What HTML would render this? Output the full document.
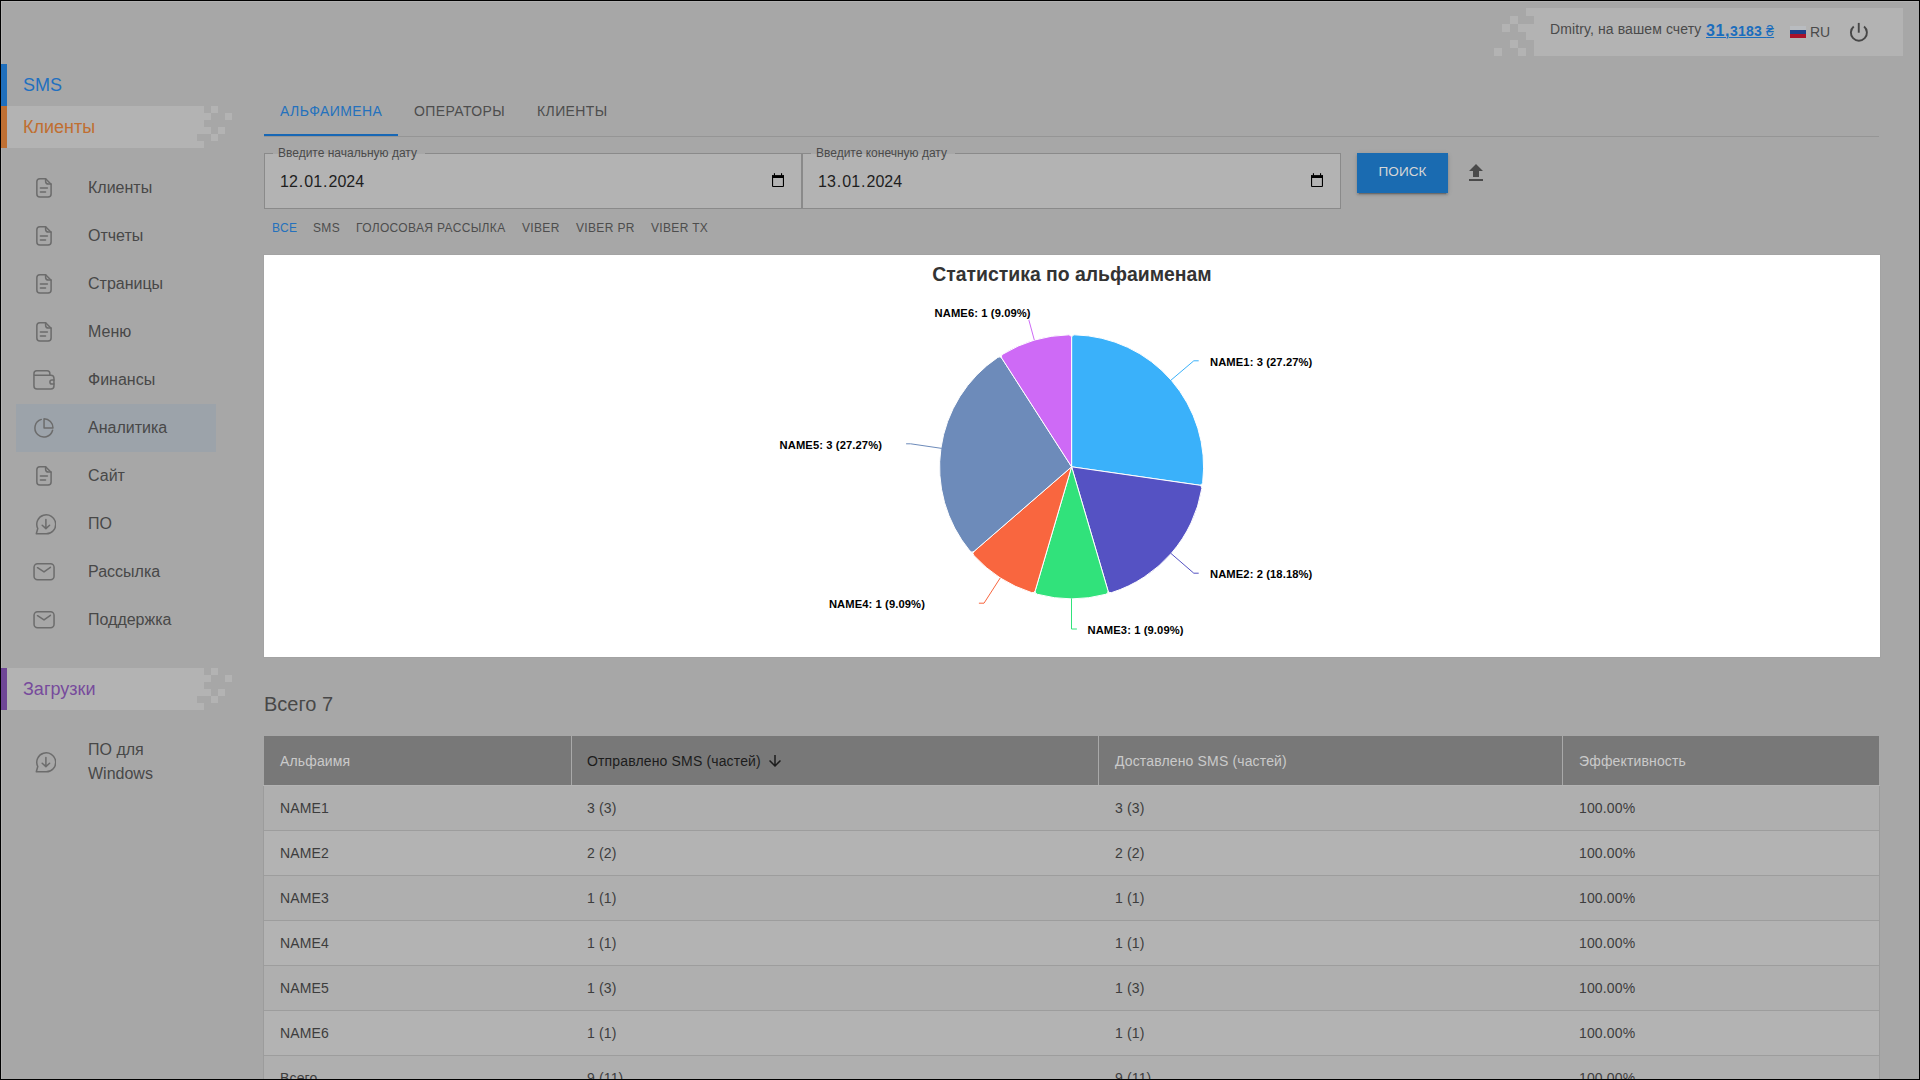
<!DOCTYPE html>
<html><head><meta charset="utf-8">
<style>
*{box-sizing:border-box;margin:0;padding:0}
html,body{width:1920px;height:1080px;overflow:hidden}
body{position:relative;background:#a7a7a7;font-family:"Liberation Sans",sans-serif;color:#4a4a4a}
.a{position:absolute;white-space:nowrap}
.lt{background:#b3b3b3}
.frame{position:absolute;left:0;top:0;width:1920px;height:1080px;border:1px solid #000;pointer-events:none;z-index:50}
.frame2{position:absolute;left:1px;top:1px;width:1918px;height:1078px;border-top:1px solid #b2b2b2;border-left:1px solid #b2b2b2}
.sq{position:absolute;background:#b3b3b3}
.item{position:absolute;left:88px;margin-top:1px;font-size:16px;line-height:20px;color:#484848}
.ico{position:absolute;left:32px;width:24px;height:24px}
.ico svg{width:24px;height:24px;display:block}
.tab{position:absolute;top:101px;font-size:14px;line-height:20px;letter-spacing:0.02857em;color:#4d4d4d}
.chip{position:absolute;top:220px;font-size:12px;line-height:16px;letter-spacing:0.02857em;color:#4d4d4d}
.th{position:absolute;top:751px;font-size:14px;line-height:20px;letter-spacing:0.01071em;color:#cacaca}
.td{position:absolute;font-size:14px;line-height:20px;letter-spacing:0.01071em;color:#3d3d3d}
.row{position:absolute;left:263px;width:1617px;height:45px;background:#afafaf;border-bottom:1px solid #9d9d9d;border-left:1px solid #9c9c9c;border-right:1px solid #9c9c9c}
</style></head><body>
<div class="frame"></div><div class="frame2"></div>

<!-- HEADER BOX -->
<div class="a lt" style="left:1534px;top:8px;width:369px;height:48px"></div>
<div class="sq" style="left:1526px;top:8px;width:8px;height:8px"></div>
<div class="sq" style="left:1510px;top:16px;width:8px;height:8px"></div>
<div class="sq" style="left:1502px;top:24px;width:8px;height:8px"></div>
<div class="sq" style="left:1518px;top:24px;width:16px;height:8px"></div>
<div class="sq" style="left:1526px;top:32px;width:8px;height:8px"></div>
<div class="sq" style="left:1510px;top:40px;width:8px;height:8px"></div>
<div class="sq" style="left:1494px;top:48px;width:8px;height:8px"></div>
<div class="sq" style="left:1518px;top:48px;width:8px;height:8px"></div>
<div class="a" style="left:1550px;top:19px;font-size:14px;line-height:20px;letter-spacing:0.1px;color:#4a4a4a">Dmitry, на вашем счету</div>
<div class="a" style="left:1706px;top:21px;line-height:20px;color:#1a6dbd;font-weight:bold;text-decoration:underline;text-decoration-thickness:1px;text-underline-offset:1px"><span style="font-size:16px;letter-spacing:0.6px">31,</span><span style="font-size:14px;letter-spacing:0.2px">3183 <span style="font-weight:normal">₴</span></span></div>
<div class="a" style="left:1790px;top:26px;width:16px;height:12px">
  <div style="height:4px;background:#b9bcc0"></div><div style="height:4px;background:#1c3f8a"></div><div style="height:4px;background:#a8112a"></div>
</div>
<div class="a" style="left:1810px;top:22px;font-size:14px;line-height:20px;color:#4a4a4a">RU</div>
<svg class="a" style="left:1847px;top:20px" width="24" height="24" viewBox="0 0 24 24"><path d="M11.75 2.9V12.7" stroke="#474747" stroke-width="1.9" fill="none"/><path d="M6.75 6.6A8 8 0 1 0 17.05 6.6" stroke="#474747" stroke-width="1.9" fill="none"/></svg>

<!-- SIDEBAR -->
<div class="a" style="left:1px;top:64px;width:6px;height:42px;background:#1f6fbd"></div>
<div class="a" style="left:23px;top:75px;font-size:18px;line-height:20px;color:#1f70c0">SMS</div>

<div class="a lt" style="left:7px;top:106px;width:197px;height:42px"></div>
<div class="sq" style="left:204px;top:113px;width:7px;height:7px"></div>
<div class="sq" style="left:204px;top:127px;width:7px;height:7px"></div>
<div class="sq" style="left:211px;top:106px;width:7px;height:7px"></div>
<div class="sq" style="left:225px;top:113px;width:7px;height:7px"></div>
<div class="sq" style="left:218px;top:127px;width:7px;height:7px"></div>
<div class="sq" style="left:211px;top:134px;width:7px;height:7px"></div>
<div class="a" style="left:197px;top:134px;width:7px;height:7px;background:#a7a7a7"></div>
<div class="a" style="left:1px;top:106px;width:6px;height:42px;background:#c07033"></div>
<div class="a" style="left:23px;top:117px;font-size:18px;line-height:20px;color:#c06e30">Клиенты</div>

<div class="a" style="left:16px;top:404px;width:200px;height:48px;background:#9ca3aa"></div>

<div class="ico" style="top:176px"><svg viewBox="0 0 24 24" fill="none" stroke="#6c6c6c" stroke-width="1.5" stroke-linecap="round" stroke-linejoin="round"><path d="M13.6 2.75H7.9Q4.85 2.75 4.85 5.8V18Q4.85 21.05 7.9 21.05H16.05Q19.1 21.05 19.1 18V8.3Z"/><path d="M13.6 2.75V5.2Q13.6 8.1 16.5 8.1H19.1"/><path d="M8.4 12H15.4M8.4 15.9H13.5"/></svg></div><div class="item" style="top:177px">Клиенты</div>
<div class="ico" style="top:224px"><svg viewBox="0 0 24 24" fill="none" stroke="#6c6c6c" stroke-width="1.5" stroke-linecap="round" stroke-linejoin="round"><path d="M13.6 2.75H7.9Q4.85 2.75 4.85 5.8V18Q4.85 21.05 7.9 21.05H16.05Q19.1 21.05 19.1 18V8.3Z"/><path d="M13.6 2.75V5.2Q13.6 8.1 16.5 8.1H19.1"/><path d="M8.4 12H15.4M8.4 15.9H13.5"/></svg></div><div class="item" style="top:225px">Отчеты</div>
<div class="ico" style="top:272px"><svg viewBox="0 0 24 24" fill="none" stroke="#6c6c6c" stroke-width="1.5" stroke-linecap="round" stroke-linejoin="round"><path d="M13.6 2.75H7.9Q4.85 2.75 4.85 5.8V18Q4.85 21.05 7.9 21.05H16.05Q19.1 21.05 19.1 18V8.3Z"/><path d="M13.6 2.75V5.2Q13.6 8.1 16.5 8.1H19.1"/><path d="M8.4 12H15.4M8.4 15.9H13.5"/></svg></div><div class="item" style="top:273px">Страницы</div>
<div class="ico" style="top:320px"><svg viewBox="0 0 24 24" fill="none" stroke="#6c6c6c" stroke-width="1.5" stroke-linecap="round" stroke-linejoin="round"><path d="M13.6 2.75H7.9Q4.85 2.75 4.85 5.8V18Q4.85 21.05 7.9 21.05H16.05Q19.1 21.05 19.1 18V8.3Z"/><path d="M13.6 2.75V5.2Q13.6 8.1 16.5 8.1H19.1"/><path d="M8.4 12H15.4M8.4 15.9H13.5"/></svg></div><div class="item" style="top:321px">Меню</div>
<div class="ico" style="top:368px"><svg viewBox="0 0 24 24" fill="none" stroke="#6c6c6c" stroke-width="1.5" stroke-linecap="round" stroke-linejoin="round"><path d="M2 7.25H18.9Q21.95 7.25 21.95 10.3V18Q21.95 21.05 18.9 21.05H5Q1.95 21.05 1.95 18V5.5Q1.95 2.75 4.7 2.75H15.1Q17.85 2.75 17.85 5.5V7.25"/><path d="M21.95 11.9H20A2.1 2.1 0 0 0 20 16.1H21.95"/></svg></div><div class="item" style="top:369px">Финансы</div>
<div class="ico" style="top:416px"><svg viewBox="0 0 24 24" fill="none" stroke="#6c6c6c" stroke-width="1.5" stroke-linecap="round" stroke-linejoin="round"><path d="M12.05 2.8V11.9H21A9 9 0 0 0 12.05 2.8Z"/><path d="M9.3 3.4A9 9 0 1 0 20.6 14.3"/></svg></div><div class="item" style="top:417px">Аналитика</div>
<div class="ico" style="top:464px"><svg viewBox="0 0 24 24" fill="none" stroke="#6c6c6c" stroke-width="1.5" stroke-linecap="round" stroke-linejoin="round"><path d="M13.6 2.75H7.9Q4.85 2.75 4.85 5.8V18Q4.85 21.05 7.9 21.05H16.05Q19.1 21.05 19.1 18V8.3Z"/><path d="M13.6 2.75V5.2Q13.6 8.1 16.5 8.1H19.1"/><path d="M8.4 12H15.4M8.4 15.9H13.5"/></svg></div><div class="item" style="top:465px">Сайт</div>
<div class="ico" style="top:512px"><svg viewBox="0 0 24 24" fill="none" stroke="#6c6c6c" stroke-width="1.5" stroke-linecap="round" stroke-linejoin="round"><path d="M5.76 16.5L4.3 21.75H13.9A9.45 9.45 0 1 0 5.76 16.5Z"/><path d="M13.9 7.6V16.4M10.2 13.2L13.9 16.6L17.6 13.2"/></svg></div><div class="item" style="top:513px">ПО</div>
<div class="ico" style="top:560px"><svg viewBox="0 0 24 24" fill="none" stroke="#6c6c6c" stroke-width="1.5" stroke-linecap="round" stroke-linejoin="round"><rect x="2.05" y="3.75" width="20" height="16.1" rx="3.5"/><path d="M5.5 7.7L12 11.9L18.4 7.3"/></svg></div><div class="item" style="top:561px">Рассылка</div>
<div class="ico" style="top:608px"><svg viewBox="0 0 24 24" fill="none" stroke="#6c6c6c" stroke-width="1.5" stroke-linecap="round" stroke-linejoin="round"><rect x="2.05" y="3.75" width="20" height="16.1" rx="3.5"/><path d="M5.5 7.7L12 11.9L18.4 7.3"/></svg></div><div class="item" style="top:609px">Поддержка</div>
<div class="ico" style="top:750px"><svg viewBox="0 0 24 24" fill="none" stroke="#6c6c6c" stroke-width="1.5" stroke-linecap="round" stroke-linejoin="round"><path d="M5.76 16.5L4.3 21.75H13.9A9.45 9.45 0 1 0 5.76 16.5Z"/><path d="M13.9 7.6V16.4M10.2 13.2L13.9 16.6L17.6 13.2"/></svg></div><div class="item" style="top:737px;line-height:24px">ПО для<br>Windows</div>

<div class="a lt" style="left:7px;top:668px;width:197px;height:42px"></div>
<div class="sq" style="left:204px;top:675px;width:7px;height:7px"></div>
<div class="sq" style="left:204px;top:689px;width:7px;height:7px"></div>
<div class="sq" style="left:211px;top:668px;width:7px;height:7px"></div>
<div class="sq" style="left:225px;top:675px;width:7px;height:7px"></div>
<div class="sq" style="left:218px;top:689px;width:7px;height:7px"></div>
<div class="sq" style="left:211px;top:696px;width:7px;height:7px"></div>
<div class="a" style="left:197px;top:696px;width:7px;height:7px;background:#a7a7a7"></div>
<div class="a" style="left:1px;top:668px;width:6px;height:42px;background:#6f4696"></div>
<div class="a" style="left:23px;top:679px;font-size:18px;line-height:20px;color:#774b9c">Загрузки</div>

<!-- MAIN -->
<div class="tab" style="left:280px;color:#2471bd">АЛЬФАИМЕНА</div>
<div class="tab" style="left:414px">ОПЕРАТОРЫ</div>
<div class="tab" style="left:537px">КЛИЕНТЫ</div>
<div class="a" style="left:264px;top:136px;width:1615px;height:1px;background:#959595"></div>
<div class="a" style="left:264px;top:134px;width:134px;height:2px;background:#1767b5"></div>


<!-- DATE INPUTS -->
<div class="a" style="left:264px;top:153px;width:538px;height:56px;border:1px solid #8a8a8a;background:#b3b3b3"></div>
<div class="a" style="left:802px;top:153px;width:539px;height:56px;border:1px solid #8a8a8a;background:#b3b3b3"></div>
<div class="a" style="left:273px;top:153px;width:152px;height:1px;background:#a7a7a7"></div>
<div class="a" style="left:811px;top:153px;width:144px;height:1px;background:#a7a7a7"></div>
<div class="a" style="left:278px;top:146px;font-size:12px;line-height:14px;color:#4a4a4a">Введите начальную дату</div>
<div class="a" style="left:816px;top:146px;font-size:12px;line-height:14px;color:#4a4a4a">Введите конечную дату</div>
<div class="a" style="left:280px;top:172px;font-size:16px;line-height:20px;color:#1e1e1e">12<span style="padding:0 1px">.</span>01<span style="padding:0 1px">.</span>2024</div>
<div class="a" style="left:818px;top:172px;font-size:16px;line-height:20px;color:#1e1e1e">13<span style="padding:0 1px">.</span>01<span style="padding:0 1px">.</span>2024</div>
<svg class="a" style="left:770px;top:172px" width="16" height="16" viewBox="0 0 16 16"><path d="M2.55 3.5V14Q2.55 14.45 3 14.45H13Q13.45 14.45 13.45 14V3.5" fill="none" stroke="#000" stroke-width="1.1"/><rect x="2" y="3.1" width="12" height="2.9" fill="#000"/><rect x="3.9" y="1.2" width="1.1" height="2.5" fill="#000"/><rect x="11" y="1.2" width="1.1" height="2.5" fill="#000"/></svg>
<svg class="a" style="left:1309px;top:172px" width="16" height="16" viewBox="0 0 16 16"><path d="M2.55 3.5V14Q2.55 14.45 3 14.45H13Q13.45 14.45 13.45 14V3.5" fill="none" stroke="#000" stroke-width="1.1"/><rect x="2" y="3.1" width="12" height="2.9" fill="#000"/><rect x="3.9" y="1.2" width="1.1" height="2.5" fill="#000"/><rect x="11" y="1.2" width="1.1" height="2.5" fill="#000"/></svg>

<!-- BUTTON -->
<div class="a" style="left:1357px;top:153px;width:91px;height:40px;background:#1a6bb1;box-shadow:0 3px 1px -2px rgba(0,0,0,.2),0 2px 2px 0 rgba(0,0,0,.14),0 1px 5px 0 rgba(0,0,0,.12)"></div>
<div class="a" style="left:1357px;top:162px;width:91px;text-align:center;font-size:13.6px;line-height:20px;color:#d6d6d6">ПОИСК</div>
<svg class="a" style="left:1464px;top:160.8px" width="24" height="24" viewBox="0 0 24 24"><path d="M5 20h14v-2H5v2zm0-10h4v6h6v-6h4l-7-7-7 7z" fill="#4a4a4a"/></svg>

<!-- CHIPS -->
<div class="chip" style="left:272px;color:#2471bd">ВСЕ</div>
<div class="chip" style="left:313px">SMS</div>
<div class="chip" style="left:356px">ГОЛОСОВАЯ РАССЫЛКА</div>
<div class="chip" style="left:522px">VIBER</div>
<div class="chip" style="left:576px">VIBER PR</div>
<div class="chip" style="left:651px">VIBER TX</div>

<!-- CHART -->
<div class="a" style="left:263px;top:254px;width:1618px;height:404px;background:#a3a3a3"></div>
<div class="a" style="left:264px;top:255px;width:1616px;height:402px;background:#fff"></div>
<svg class="a" style="left:264px;top:255px" width="1616" height="402" viewBox="0 0 1616 402">
<path d="M807.60,211.80 L807.60,82.80 Q807.60,79.80 810.60,79.83 A132.0,132.0 0 0 1 938.65,227.61 Q938.26,230.59 935.29,230.16 Z" fill="#3ab1fa" stroke="#ffffff" stroke-width="1" stroke-linejoin="round"/>
<path d="M807.60,211.80 L935.29,230.16 Q938.26,230.59 937.80,233.55 A132.0,132.0 0 0 1 847.66,337.58 Q844.79,338.45 843.94,335.57 Z" fill="#5552c3" stroke="#ffffff" stroke-width="1" stroke-linejoin="round"/>
<path d="M807.60,211.80 L843.94,335.57 Q844.79,338.45 841.90,339.27 A132.0,132.0 0 0 1 773.30,339.27 Q770.41,338.45 771.26,335.57 Z" fill="#31e27b" stroke="#ffffff" stroke-width="1" stroke-linejoin="round"/>
<path d="M807.60,211.80 L771.26,335.57 Q770.41,338.45 767.54,337.58 A132.0,132.0 0 0 1 709.83,300.49 Q707.84,298.24 710.11,296.28 Z" fill="#f9663f" stroke="#ffffff" stroke-width="1" stroke-linejoin="round"/>
<path d="M807.60,211.80 L710.11,296.28 Q707.84,298.24 705.90,295.95 A132.0,132.0 0 0 1 733.73,102.40 Q736.24,100.75 737.86,103.28 Z" fill="#6d8bba" stroke="#ffffff" stroke-width="1" stroke-linejoin="round"/>
<path d="M807.60,211.80 L737.86,103.28 Q736.24,100.75 738.78,99.16 A132.0,132.0 0 0 1 804.60,79.83 Q807.60,79.80 807.60,82.80 Z" fill="#ce6af6" stroke="#ffffff" stroke-width="1" stroke-linejoin="round"/>


<text x="808" y="25.8" text-anchor="middle" font-family="Liberation Sans" font-size="19.4" font-weight="bold" fill="#333333">Статистика по альфаименам</text>
<g fill="none" stroke-width="1">
<path d="M906.8 125.3L929.8 105.8H934.7" stroke="#3ab1fa"/>
<path d="M906.8 298.3L929.8 318.2H934.7" stroke="#5552c3"/>
<path d="M807.5 343.5V374H812.9" stroke="#31e27b"/>
<path d="M736.2 323L720 348.2H714.9" stroke="#f9663f"/>
<path d="M677.8 193.4L646.6 188.8H642.1" stroke="#6d8bba"/>
<path d="M770.3 85L762.7 57H759.75" stroke="#ce6af6"/>
</g>
<g font-family="Liberation Sans" font-size="11.2" font-weight="bold" letter-spacing="0.1" fill="#000" stroke="#fff" stroke-width="2" stroke-linejoin="round" paint-order="stroke">
<text x="946" y="111">NAME1: 3 (27.27%)</text>
<text x="946" y="322.6">NAME2: 2 (18.18%)</text>
<text x="823.5" y="378.75">NAME3: 1 (9.09%)</text>
<text x="661" y="352.9" text-anchor="end">NAME4: 1 (9.09%)</text>
<text x="618" y="193.7" text-anchor="end">NAME5: 3 (27.27%)</text>
<text x="670.6" y="62.1">NAME6: 1 (9.09%)</text>
</g>
</svg>

<!-- TOTAL -->
<div class="a" style="left:264px;top:692px;font-size:20px;line-height:24px;color:#484848">Всего 7</div>

<!-- TABLE -->
<div class="a" style="left:264px;top:736px;width:1615px;height:49px;background:#787878"></div>
<div class="a" style="left:571px;top:736px;width:1px;height:49px;background:#a9a9a9"></div>
<div class="a" style="left:1098px;top:736px;width:1px;height:49px;background:#a9a9a9"></div>
<div class="a" style="left:1562px;top:736px;width:1px;height:49px;background:#a9a9a9"></div>
<div class="a" style="left:263px;top:785px;width:1617px;height:1px;background:#b4b4b4"></div>
<div class="th" style="left:280px">Альфаимя</div>
<div class="th" style="left:587px;color:#1c1c1c">Отправлено SMS (частей)</div>
<svg class="a" style="left:766px;top:752px" width="18" height="18" viewBox="0 0 24 24"><path d="M20 12l-1.41-1.41L13 16.17V4h-2v12.17l-5.58-5.59L4 12l8 8 8-8z" fill="#1c1c1c"/></svg>
<div class="th" style="left:1115px">Доставлено SMS (частей)</div>
<div class="th" style="left:1579px">Эффективность</div>
<div class="row" style="top:786px"></div>
<div class="td" style="left:280px;top:798px">NAME1</div><div class="td" style="left:587px;top:798px">3 (3)</div><div class="td" style="left:1115px;top:798px">3 (3)</div><div class="td" style="left:1579px;top:798px">100.00%</div>
<div class="row" style="top:831px;background:#b3b3b3"></div>
<div class="td" style="left:280px;top:843px">NAME2</div><div class="td" style="left:587px;top:843px">2 (2)</div><div class="td" style="left:1115px;top:843px">2 (2)</div><div class="td" style="left:1579px;top:843px">100.00%</div>
<div class="row" style="top:876px"></div>
<div class="td" style="left:280px;top:888px">NAME3</div><div class="td" style="left:587px;top:888px">1 (1)</div><div class="td" style="left:1115px;top:888px">1 (1)</div><div class="td" style="left:1579px;top:888px">100.00%</div>
<div class="row" style="top:921px;background:#b3b3b3"></div>
<div class="td" style="left:280px;top:933px">NAME4</div><div class="td" style="left:587px;top:933px">1 (1)</div><div class="td" style="left:1115px;top:933px">1 (1)</div><div class="td" style="left:1579px;top:933px">100.00%</div>
<div class="row" style="top:966px"></div>
<div class="td" style="left:280px;top:978px">NAME5</div><div class="td" style="left:587px;top:978px">1 (3)</div><div class="td" style="left:1115px;top:978px">1 (3)</div><div class="td" style="left:1579px;top:978px">100.00%</div>
<div class="row" style="top:1011px;background:#b3b3b3"></div>
<div class="td" style="left:280px;top:1023px">NAME6</div><div class="td" style="left:587px;top:1023px">1 (1)</div><div class="td" style="left:1115px;top:1023px">1 (1)</div><div class="td" style="left:1579px;top:1023px">100.00%</div>
<div class="row" style="top:1056px"></div>
<div class="td" style="left:280px;top:1068px">Всего</div><div class="td" style="left:587px;top:1068px">9 (11)</div><div class="td" style="left:1115px;top:1068px">9 (11)</div><div class="td" style="left:1579px;top:1068px">100.00%</div>
</body></html>
